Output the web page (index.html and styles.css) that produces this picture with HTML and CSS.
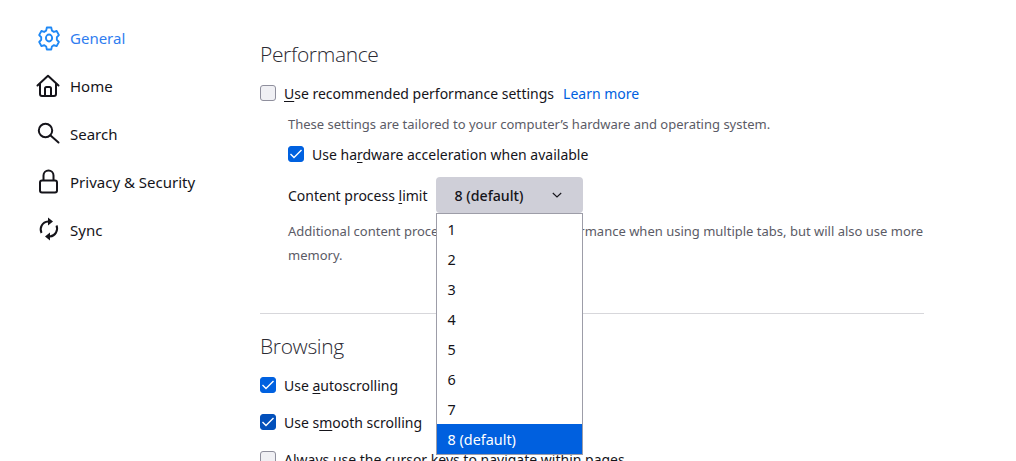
FILE: index.html
```html
<!DOCTYPE html>
<html lang="en">
<head>
<meta charset="utf-8">
<title>Settings</title>
<link rel="stylesheet" href="styles.css">
</head>
<body>
<div class="page">
  <nav class="sidebar">
    <a class="nav-item active">
      <svg class="nav-icon" viewBox="0 0 24 24" fill="none" stroke="currentColor" stroke-width="2" stroke-linejoin="round"><g transform="translate(2 0) scale(.92 1)"><path d="M9.6 1.6h4.8l.7 3 2.2 1.3 3-.9 2.4 4.1-2.2 2.2v2.5l2.2 2.2-2.4 4.1-3-.9-2.2 1.3-.7 3H9.6l-.7-3-2.2-1.3-3 .9-2.4-4.1 2.2-2.2v-2.5L1.3 9.1l2.4-4.1 3 .9 2.2-1.3z"/><circle cx="12" cy="12" r="3.4"/></g></svg>
      <span>General</span>
    </a>
    <a class="nav-item">
      <svg class="nav-icon" viewBox="0 0 24 24" fill="none" stroke="currentColor" stroke-width="2" stroke-linejoin="round" stroke-linecap="round"><path d="M1.5 11.5 12 1.8 22.5 11.5"/><path d="M4 10v10a2 2 0 0 0 2 2h12a2 2 0 0 0 2-2V10"/><path d="M9 22v-7.5a1.5 1.5 0 0 1 1.5-1.5h3a1.5 1.5 0 0 1 1.5 1.5V22"/></svg>
      <span>Home</span>
    </a>
    <a class="nav-item">
      <svg class="nav-icon" viewBox="0 0 24 24" fill="none" stroke="currentColor" stroke-width="2" stroke-linecap="round"><circle cx="9.5" cy="8.5" r="6.7"/><path d="m14.3 13.3 8.2 7.2"/></svg>
      <span>Search</span>
    </a>
    <a class="nav-item">
      <svg class="nav-icon" viewBox="0 0 24 24" fill="none" stroke="currentColor" stroke-width="2" stroke-linejoin="round"><rect x="4" y="10.5" width="17" height="12" rx="2"/><path d="M7.5 10.5V5.5a5 5 0 0 1 10 0v5"/></svg>
      <span>Privacy &amp; Security</span>
    </a>
    <a class="nav-item">
      <svg class="nav-icon" viewBox="0 0 24 24" fill="none" stroke="currentColor" stroke-width="2"><path d="M5.5 15A8 8 0 0 1 12 3.5"/><path d="M20.5 7.5A8 8 0 0 1 14 18.5"/><path d="M12 -.5v8l5-4z" fill="currentColor" stroke="none"/><path d="M14 14.5v8l-5-4z" fill="currentColor" stroke="none"/></svg>
      <span>Sync</span>
    </a>
  </nav>

  <main class="content">
    <section class="group">
      <h2 class="heading">Performance</h2>
      <div class="row top-row">
        <span class="check"></span>
        <span><u>U</u>se recommended performance settings</span>
        <a class="link">Learn more</a>
      </div>
      <div class="indent">
        <p class="note">These settings are tailored to your computer’s hardware and operating system.</p>
        <div class="row hw-row">
          <span class="check on"><svg viewBox="0 0 14 14"><path d="M1.5 7 5 10.5 12.5 3"/></svg></span>
          <span>Use ha<u>r</u>dware acceleration when available</span>
        </div>
        <div class="limit-row">
          <span>Content process <u>l</u>imit</span>
          <div class="select-wrap">
            <div class="select">
              <span>8 (default)</span>
              <svg class="chev" viewBox="0 0 10 10"><path d="M.8 3 5 7 9.2 3"/></svg>
            </div>
            <ul class="menu">
              <li>1</li><li>2</li><li>3</li><li>4</li><li>5</li><li>6</li><li>7</li><li class="picked">8 (default)</li>
            </ul>
          </div>
        </div>
        <p class="note wrap">Additional content processes can improve performance when using multiple tabs, but will also use more memory.</p>
      </div>
    </section>
    <hr class="rule">
    <section class="group">
      <h2 class="heading">Browsing</h2>
      <div class="row browse-row">
        <span class="check on"><svg viewBox="0 0 14 14"><path d="M1.5 7 5 10.5 12.5 3"/></svg></span>
        <span>Use <u>a</u>utoscrolling</span>
      </div>
      <div class="row browse-row">
        <span class="check on dark"><svg viewBox="0 0 14 14"><path d="M1.5 7 5 10.5 12.5 3"/></svg></span>
        <span>Use s<u>m</u>ooth scrolling</span>
      </div>
      <div class="row browse-row">
        <span class="check"></span>
        <span>Always use the cursor keys to navigate within pages</span>
      </div>
    </section>
  </main>
</div>
</body>
</html>
```

FILE: styles.css
```css
* { box-sizing: border-box; }
html, body { margin: 0; height: 461px; overflow: hidden; background: #fff; }
body {
  font-family: "Noto Sans", "Open Sans", sans-serif;
  font-size: 14px;
  color: #15141a;
}
u { text-underline-offset: 2px; }
.page { display: flex; height: 461px; overflow: hidden; }

.sidebar { width: 260px; flex: none; padding: 14px 0 0 36px; display: flex; flex-direction: column; font-size: 15px; }
.nav-item { display: flex; align-items: center; gap: 10px; height: 48px; }
.nav-item.active { color: #1e88f5; }
.nav-item.active span { color: #2f7df0; }
.nav-icon { width: 24px; height: 24px; flex: none; overflow: visible; }

.content { width: 664px; flex: none; }
.heading { margin: 0; font-size: 21px; font-weight: 300; line-height: 30px; letter-spacing: -0.35px; font-family: "Open Sans", "Noto Sans", sans-serif; color: #2b2a33; }
.group:first-child .heading { margin-top: 39px; }
.row { display: flex; align-items: center; gap: 8px; }
.top-row { margin-top: 12px; height: 24px; }
.link { color: #0061e0; margin-left: 1px; }
.check { width: 16px; height: 16px; border: 1px solid #8f8f9d; border-radius: 3px; background: #f0f0f4; flex: none; display: block; }
.check.on { background: #0061e0; border-color: #0061e0; }
.check.dark { background: #0250bb; border-color: #0250bb; }
.check svg { display: block; width: 14px; height: 14px; fill: none; stroke: #fff; stroke-width: 1.4; }
.indent { padding-left: 28px; }
.note { margin: 0; font-size: 13px; color: #5b5b66; line-height: 24px; }
.indent > .note:first-child { margin-top: 7px; }
.hw-row { height: 24px; margin-top: 6px; }
.limit-row { display: flex; align-items: center; gap: 8px; margin-top: 11px; height: 36px; }
.select-wrap { position: relative; width: 147px; height: 36px; }
.select { height: 36px; background: #cfcfd8; border-radius: 4px; display: flex; align-items: center; justify-content: space-between; padding: 0 21px 0 19px; font-weight: 500; font-size: 14.2px; }
.chev { width: 10px; height: 10px; fill: none; stroke: #15141a; stroke-width: 1.1; }
.menu { position: absolute; left: 0; top: 36px; width: 147px; margin: 0; padding: 0; list-style: none; background: #fff; border: 1px solid #9d9da8; z-index: 2; font-size: 14.4px; }
.menu li { height: 30px; line-height: 29px; padding: 1px 0 0 11px; }
.menu li.picked { background: #0060df; color: #fff; }
.wrap { margin-top: 6px; }
.rule { border: 0; border-top: 1px solid #d7d7db; margin: 46px 0 0; }
.group:last-child .heading { margin-top: 17px; }
.browse-row { height: 24px; margin-top: 13px; }
.heading + .browse-row { margin-top: 12px; }
```
